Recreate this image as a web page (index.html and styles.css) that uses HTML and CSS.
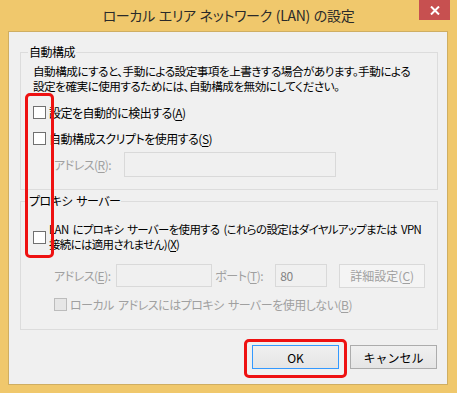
FILE: index.html
```
<!DOCTYPE html>
<html lang="ja">
<head>
    <meta charset="UTF-8">
    <meta name="viewport" content="width=device-width, initial-scale=1.0">
    <title>ローカル エリア ネットワーク (LAN) の設定</title>
    <link rel="stylesheet" href="styles.css">
</head>
<body>
    <div class="window">
        <div class="titlebar">
            <span class="title">ローカル エリア ネットワーク (LAN) の設定</span>
            <button class="close-btn" aria-label="閉じる">
                <svg width="10" height="9" viewBox="0 0 10 9">
                    <path d="M1 0.5 L9 8.5 M9 0.5 L1 8.5" stroke="#fff" stroke-width="2" fill="none"/>
                </svg>
            </button>
        </div>

        <div class="panel">
            <fieldset class="group group-auto">
                <legend>自動構成</legend>
                <p class="desc">自動構成にすると、手動による設定事項を上書きする場合があります。手動による<br>設定を確実に使用するためには、自動構成を無効にしてください。</p>
                <div class="check"><span class="box"></span><span>設定を自動的に検出する(<u>A</u>)</span></div>
                <div class="check"><span class="box"></span><span>自動構成スクリプトを使用する(<u>S</u>)</span></div>
                <div class="field-row indent">
                    <span class="muted label-r">アドレス(<u>R</u>):</span>
                    <span class="input input-script"></span>
                </div>
            </fieldset>

            <fieldset class="group group-proxy">
                <legend>プロキシ サーバー</legend>
                <div class="check check-multi"><span class="box"></span><span class="long">LAN にプロキシ サーバーを使用する (これらの設定はダイヤルアップまたは VPN<br>接続には適用されません)(<u>X</u>)</span></div>
                <div class="field-row indent">
                    <span class="muted label-e">アドレス(<u>E</u>):</span>
                    <span class="input input-addr"></span>
                    <span class="muted label-port">ポート(<u>T</u>):</span>
                    <span class="input input-port">80</span>
                    <span class="btn btn-disabled btn-advanced">詳細設定(<u>C</u>)</span>
                </div>
                <div class="check indent disabled"><span class="box"></span><span>ローカル アドレスにはプロキシ サーバーを使用しない(<u>B</u>)</span></div>
            </fieldset>

            <div class="actions">
                <button class="btn btn-default">OK</button>
                <button class="btn">キャンセル</button>
            </div>
        </div>

        <!-- red markers drawn over the screenshot -->
        <span class="mark mark-checks"></span>
        <span class="mark mark-ok"></span>
    </div>
</body>
</html>
```

FILE: styles.css
```
* {
    box-sizing: border-box;
}

body {
    margin: 0;
    font-family: "Noto Sans CJK JP", "Noto Sans", sans-serif;
    font-size: 12px;
    color: #000;
    background-color: #f0c86c;
}

u {
    text-decoration-thickness: 1px;
    text-underline-offset: 2px;
}

.window {
    position: relative;
    width: 457px;
    height: 393px;
    padding: 0 9px 8px 8px;
    background-color: #f0c86c;
    display: flex;
    flex-direction: column;
}

.titlebar {
    height: 31px;
    flex: none;
    display: flex;
    justify-content: center;
    align-items: center;
    margin: 0 -9px 0 -8px;
    padding-bottom: 1px;
}

.title {
    font-size: 14px;
    color: #2a2a2a;
    font-feature-settings: "palt";
    letter-spacing: -0.3px;
    word-spacing: 1px;
}

.close-btn {
    position: absolute;
    top: 0;
    left: 419px;
    width: 31px;
    height: 20px;
    padding: 0;
    border: none;
    background-color: #c75050;
    display: flex;
    justify-content: center;
    align-items: center;
}

.panel {
    flex: 1;
    min-height: 0;
    background-color: #f0f0f0;
    border: 1px solid #cfae62;
    padding: 13px 9px 0 11px;
    font-feature-settings: "palt";
    letter-spacing: -0.5px;
    word-spacing: 2px;
    white-space: nowrap;
}

.group {
    margin: 0;
    min-width: 0;
    border: 1px solid #dcdcdc;
    padding: 5px 12px 12px 12px;
}

.group legend {
    margin-left: -5px;
    padding: 0 1px;
    line-height: 14px;
    color: #000;
}

.group-proxy {
    margin-top: 4px;
    padding-top: 14px;
    padding-bottom: 16px;
}

.desc {
    margin: 0;
    font-size: 11.6px;
    line-height: 15px;
    letter-spacing: -0.5px;
}

.check {
    display: flex;
    align-items: center;
    gap: 3px;
    height: 18px;
    margin-top: 8px;
    line-height: 15px;
}

.group-auto .desc + .check {
    margin-top: 9px;
}

.check-multi {
    height: auto;
    margin-top: 0;
}

.check-multi .box {
    margin-top: 1px;
}

.long {
    font-size: 11.4px;
    letter-spacing: -0.6px;
}

.box {
    flex: none;
    width: 13px;
    height: 13px;
    border: 1px solid #707070;
    background-color: #fff;
}

.check.disabled {
    color: #a0a0a0;
    margin-top: 7px;
}

.check.disabled .box {
    border-color: #bcbcbc;
    background-color: #e6e6e6;
}

.indent {
    margin-left: 21px;
}

.field-row {
    display: flex;
    align-items: center;
    height: 25px;
    margin-top: 5px;
}

.group-proxy .field-row {
    margin-top: 11px;
}

.muted {
    color: #a0a0a0;
}

.label-r {
    width: 70px;
}

.label-e {
    width: 63px;
}

.label-port {
    width: 61px;
    margin-left: 3px;
}

.input {
    height: 25px;
    border: 1px solid #d9d9d9;
    background-color: #f0f0f0;
    display: flex;
    align-items: center;
    padding-left: 4px;
    color: #838383;
}

.input-script {
    width: 212px;
}

.input-addr {
    width: 98px;
    height: 23px;
}

.input-port {
    width: 53px;
    height: 23px;
}

.btn {
    height: 24px;
    width: 87px;
    border: 1px solid #acacac;
    background: linear-gradient(#f0f0f0, #e5e5e5);
    font-family: inherit;
    font-size: 12px;
    letter-spacing: 0;
    color: #000;
    padding: 0;
    display: flex;
    justify-content: center;
    align-items: center;
}

.btn-disabled {
    color: #a0a0a0;
    border-color: #d9d9d9;
    background: #f4f4f4;
}

.btn-advanced {
    margin-left: 12px;
}

.btn-default {
    border-color: #3399ff;
}

.actions {
    display: flex;
    justify-content: flex-end;
    gap: 11px;
    margin-top: 15px;
    padding-right: 1px;
}

.mark {
    position: absolute;
    border: 3px solid #ee1111;
    border-radius: 5px;
}

.mark-checks {
    left: 25px;
    top: 93px;
    width: 29px;
    height: 165px;
}

.mark-ok {
    left: 244px;
    top: 339px;
    width: 103px;
    height: 39px;
}
```
